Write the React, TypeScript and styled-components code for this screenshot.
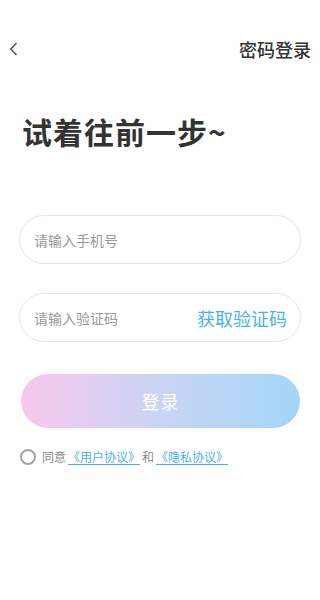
import React from "react";
import styled, { createGlobalStyle } from "styled-components";

const GlobalStyle = createGlobalStyle`
  html, body {
    margin: 0;
    padding: 0;
    background: #fff;
  }
  body {
    font-family: "Noto Sans CJK SC", "Noto Sans", sans-serif;
  }
  * {
    box-sizing: border-box;
  }
`;

const Page = styled.div`
  width: 320px;
  height: 600px;
  background: #fff;
  display: flex;
  flex-direction: column;
`;

const Header = styled.div`
  height: 36px;
  margin-top: 32px;
  padding: 0 9px 0 9px;
  display: flex;
  align-items: center;
  justify-content: space-between;
`;

const BackButton = styled.div`
  width: 12px;
  height: 16px;
  display: flex;
  align-items: center;
  margin-top: -3px;
`;

const HeaderAction = styled.div`
  font-size: 18px;
  font-weight: 500;
  color: #333;
  line-height: 1;
  margin-top: -2px;
`;

const Title = styled.h1`
  margin: 48px 0 0 22px;
  font-size: 30px;
  font-weight: 700;
  color: #333;
  line-height: 1;
  letter-spacing: 1px;
`;

const Form = styled.div`
  padding: 0 19px;
  margin-top: 69px;
  display: flex;
  flex-direction: column;
`;

const Field = styled.div<{ $gap?: number }>`
  height: 49px;
  border: 1px solid #e6e6e6;
  border-radius: 25px;
  display: flex;
  align-items: center;
  padding: 0 14px 0 14px;
  margin-top: ${(p) => p.$gap ?? 0}px;
`;

const Input = styled.input`
  flex: 1;
  min-width: 0;
  border: none;
  outline: none;
  background: transparent;
  font-family: inherit;
  font-size: 14px;
  color: #333;
  padding: 0;
  &::placeholder {
    color: #999;
  }
`;

const CodeLink = styled.span`
  font-size: 18px;
  color: #4bb2ea;
  margin-right: -1px;
`;

const LoginButton = styled.button`
  margin: 32px 1px 0 2px;
  height: 54px;
  border: none;
  border-radius: 27px;
  background: linear-gradient(90deg, #f8c8ee 0%, #c9d4f4 50%, #a2d6f8 100%);
  color: #fff;
  font-family: inherit;
  font-size: 18px;
  letter-spacing: 1px;
`;

const Agreement = styled.div`
  margin-top: 20px;
  padding-left: 1px;
  display: flex;
  align-items: center;
  font-size: 12px;
  color: #888;
`;

const Radio = styled.span`
  width: 16px;
  height: 16px;
  border: 2px solid #a3a3a3;
  border-radius: 50%;
  margin-right: 6px;
`;

const Link = styled.a`
  color: #4bb2ea;
  text-decoration: underline;
  text-underline-offset: 2px;
  margin: 0 2px;
`;

const App = () => {
  return (
    <Page>
      <GlobalStyle />
      <Header>
        <BackButton>
          <svg width="9" height="14" viewBox="0 0 9 14" fill="none">
            <path d="M7.5 1L1.8 7l5.7 6" stroke="#555" strokeWidth="1.6" />
          </svg>
        </BackButton>
        <HeaderAction>密码登录</HeaderAction>
      </Header>
      <Title>试着往前一步~</Title>
      <Form>
        <Field>
          <Input placeholder="请输入手机号" />
        </Field>
        <Field $gap={29}>
          <Input placeholder="请输入验证码" />
          <CodeLink>获取验证码</CodeLink>
        </Field>
        <LoginButton>登录</LoginButton>
        <Agreement>
          <Radio />
          同意
          <Link>《用户协议》</Link>和<Link>《隐私协议》</Link>
        </Agreement>
      </Form>
    </Page>
  );
};

export default App;
